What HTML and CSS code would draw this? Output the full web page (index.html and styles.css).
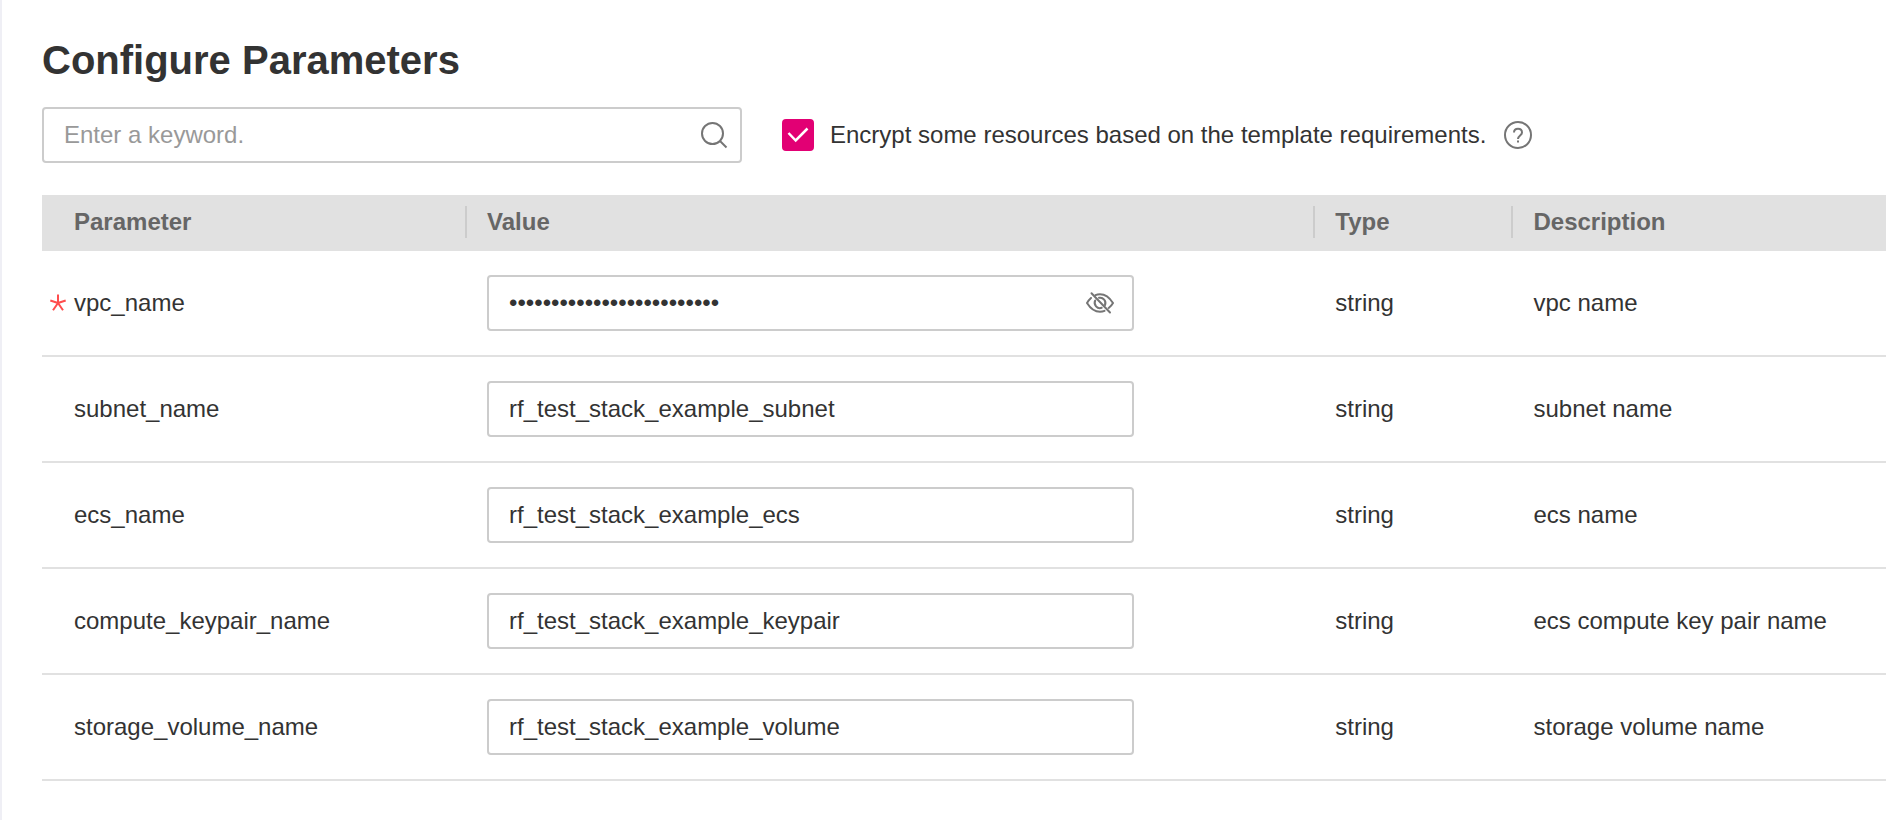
FILE: index.html
```html
<!DOCTYPE html>
<html lang="en">
<head>
<meta charset="utf-8">
<meta name="viewport" content="width=device-width, initial-scale=1">
<title>Configure Parameters</title>
<link rel="stylesheet" href="styles.css">
</head>
<body>
<main class="page">
  <h1 class="title">Configure Parameters</h1>

  <div class="toolbar">
    <div class="field search">
      <input class="input" type="text" placeholder="Enter a keyword." aria-label="Search parameters">
      <button class="icon-button" type="button" aria-label="Search">
        <svg class="icon" viewBox="0 0 28 28" aria-hidden="true">
          <circle cx="12.5" cy="12.5" r="10.5"/>
          <path d="M20 20l6.500 6.500"/>
        </svg>
      </button>
    </div>
    <div class="encrypt">
      <span class="checkbox">
        <input class="checkbox-input" id="encrypt" type="checkbox" checked>
        <svg class="checkbox-mark" viewBox="0 0 32 32" aria-hidden="true"><path d="M6.500 14l7.200 7.500L25.500 9.500"/></svg>
      </span>
      <label class="encrypt-label" for="encrypt">Encrypt some resources based on the template requirements.</label>
      <button class="icon-button help" type="button" aria-label="Help">
        <svg class="icon" viewBox="0 0 28 28" aria-hidden="true">
          <circle cx="14" cy="14" r="13"/>
          <path d="M10 11.500C10 9 11.700 7.700 14 7.700s4 1.500 4 3.700c0 3-4 3.100-4 6.600"/>
          <path d="M14 19.400v2.200"/>
        </svg>
      </button>
    </div>
  </div>

  <table class="params">
    <colgroup>
      <col class="col-name">
      <col class="col-value">
      <col class="col-type">
      <col>
    </colgroup>
    <thead>
      <tr>
        <th class="head" scope="col"><div class="head-text">Parameter</div></th>
        <th class="head" scope="col"><div class="head-text">Value</div></th>
        <th class="head" scope="col"><div class="head-text">Type</div></th>
        <th class="head" scope="col"><div class="head-text">Description</div></th>
      </tr>
    </thead>
    <tbody>
      <tr>
        <td class="cell name">
          <label class="required" for="vpc">
            <svg class="star" viewBox="0 0 16 18" aria-hidden="true"><path d="M8 9V.500M8 9L.300 6.500M8 9l7.700-2.500M8 9l-5 7.200M8 9l5 7.200"/></svg>
            vpc_name
          </label>
        </td>
        <td class="cell">
          <div class="field">
            <input class="input" id="vpc" type="password" value="rf_test_stack_example_vpc">
            <button class="icon-button" type="button" aria-label="Show value">
              <svg class="icon eye" viewBox="0 0 28 24" aria-hidden="true">
                <path d="M5 7Q2.800 9 1 12q5.500 8.800 13 8.800 2.500 0 4.500-.900"/>
                <path d="M9.500 4.200Q11.500 3.200 14 3.200q7.500 0 13 8.800-1.700 3-4.300 5"/>
                <path d="M9.200 9.500a5.300 5.300 0 0 0 6.500 7.300"/>
                <path d="M13 6.800a5.300 5.300 0 0 1 6 7.200"/>
                <path d="M5.500 2.200l18.500 19.300"/>
              </svg>
            </button>
          </div>
        </td>
        <td class="cell">string</td>
        <td class="cell">vpc name</td>
      </tr>
      <tr>
        <td class="cell name"><label for="subnet">subnet_name</label></td>
        <td class="cell"><div class="field"><input class="input" id="subnet" type="text" value="rf_test_stack_example_subnet"></div></td>
        <td class="cell">string</td>
        <td class="cell">subnet name</td>
      </tr>
      <tr>
        <td class="cell name"><label for="ecs">ecs_name</label></td>
        <td class="cell"><div class="field"><input class="input" id="ecs" type="text" value="rf_test_stack_example_ecs"></div></td>
        <td class="cell">string</td>
        <td class="cell">ecs name</td>
      </tr>
      <tr>
        <td class="cell name"><label for="keypair">compute_keypair_name</label></td>
        <td class="cell"><div class="field"><input class="input" id="keypair" type="text" value="rf_test_stack_example_keypair"></div></td>
        <td class="cell">string</td>
        <td class="cell">ecs compute key pair name</td>
      </tr>
      <tr>
        <td class="cell name"><label for="volume">storage_volume_name</label></td>
        <td class="cell"><div class="field"><input class="input" id="volume" type="text" value="rf_test_stack_example_volume"></div></td>
        <td class="cell">string</td>
        <td class="cell">storage volume name</td>
      </tr>
    </tbody>
  </table>
</main>
</body>
</html>
```
FILE: styles.css
```css
* {
  box-sizing: border-box;
}

body {
  margin: 0;
  background: #fff;
  color: #333;
  font-family: "Liberation Sans", Arial, sans-serif;
  font-size: 24px;
  line-height: 32px;
}

.page {
  min-height: 100vh;
  padding: 36px 0 0 40px;
  border-left: 2px solid #efeff5;
}

.title {
  margin: 0 0 23px;
  font-size: 40px;
  line-height: 48px;
}

.toolbar {
  display: flex;
  align-items: center;
  gap: 40px;
  margin-bottom: 32px;
}

.field {
  display: flex;
  align-items: center;
  width: 80%;
  height: 56px;
  border: 2px solid #ccc;
  border-radius: 4px;
  background: #fff;
}

.search {
  width: 100%;
  max-width: 700px;
}

.input {
  flex: 1;
  min-width: 0;
  height: 100%;
  padding: 0 20px;
  border: 0;
  outline: 0;
  background: transparent;
  color: inherit;
  font: inherit;
}

.input::placeholder {
  color: #999;
  opacity: 1;
}

.icon-button {
  display: flex;
  padding: 0;
  border: 0;
  background: none;
  color: #757575;
  cursor: pointer;
}

.field .icon-button {
  margin-right: 12px;
}

.icon {
  width: 28px;
  height: 28px;
  fill: none;
  stroke: currentColor;
  stroke-width: 2;
}

.field .eye {
  height: 24px;
  margin-right: 6px;
  stroke-linecap: round;
}

.encrypt {
  display: flex;
  align-items: center;
  gap: 16px;
}

.encrypt-label {
  white-space: nowrap;
}

.help {
  margin-left: 2px;
}

.checkbox {
  display: grid;
  width: 32px;
  height: 32px;
}

.checkbox-input,
.checkbox-mark {
  grid-area: 1 / 1;
  width: 32px;
  height: 32px;
  margin: 0;
}

.checkbox-input {
  appearance: none;
  border: 2px solid #ccc;
  border-radius: 4px;
}

.checkbox-input:checked {
  border-color: #e20074;
  background: #e20074;
}

.checkbox-mark {
  fill: none;
  stroke: #fff;
  stroke-width: 2.5;
  pointer-events: none;
}

.params {
  width: 100%;
  border-collapse: separate;
  border-spacing: 0;
  table-layout: fixed;
}

.col-name {
  width: 23.05%;
}

.col-value {
  width: 46%;
}

.col-type {
  width: 10.75%;
}

.head {
  padding: 11px 0 13px;
  background: #e1e1e1;
  color: #666;
  text-align: left;
}

.head-text {
  padding-left: 20px;
  border-right: 2px solid #ccc;
}

.head:first-child .head-text {
  padding-left: 32px;
}

.head:last-child .head-text {
  border-right: 0;
}

.cell {
  padding: 24px 20px;
  border-bottom: 2px solid #e1e1e1;
}

.name {
  padding-left: 32px;
}

.required {
  display: flex;
  align-items: center;
  gap: 8px;
  margin-left: -24px;
}

.star {
  width: 16px;
  height: 18px;
  fill: none;
  stroke: #ff4c4c;
  stroke-width: 2;
}
```
